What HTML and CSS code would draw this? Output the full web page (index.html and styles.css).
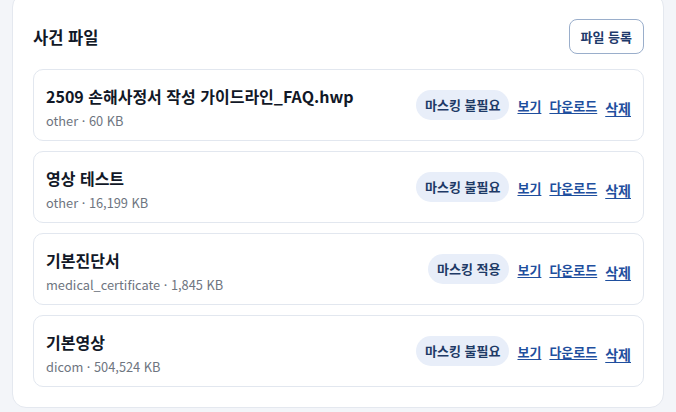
FILE: index.html
```html
<!DOCTYPE html>
<html lang="ko">
<head>
<meta charset="utf-8">
<link rel="stylesheet" href="styles.css">
</head>
<body>
<div class="page">
  <section class="card">
    <header class="card-head">
      <h2 class="card-title">사건 파일</h2>
      <button class="btn-outline" type="button">파일 등록</button>
    </header>
    <ul class="files">
      <li class="file">
        <div class="file-info">
          <div class="file-name">2509 손해사정서 작성 가이드라인_FAQ.hwp</div>
          <div class="file-meta">other · 60 KB</div>
        </div>
        <div class="file-actions">
          <span class="badge">마스킹 불필요</span>
          <a class="link" href="#">보기</a>
          <a class="link" href="#">다운로드</a>
          <button class="link link-del" type="button">삭제</button>
        </div>
      </li>
      <li class="file">
        <div class="file-info">
          <div class="file-name">영상 테스트</div>
          <div class="file-meta">other · 16,199 KB</div>
        </div>
        <div class="file-actions">
          <span class="badge">마스킹 불필요</span>
          <a class="link" href="#">보기</a>
          <a class="link" href="#">다운로드</a>
          <button class="link link-del" type="button">삭제</button>
        </div>
      </li>
      <li class="file">
        <div class="file-info">
          <div class="file-name">기본진단서</div>
          <div class="file-meta">medical_certificate · 1,845 KB</div>
        </div>
        <div class="file-actions">
          <span class="badge">마스킹 적용</span>
          <a class="link" href="#">보기</a>
          <a class="link" href="#">다운로드</a>
          <button class="link link-del" type="button">삭제</button>
        </div>
      </li>
      <li class="file">
        <div class="file-info">
          <div class="file-name">기본영상</div>
          <div class="file-meta">dicom · 504,524 KB</div>
        </div>
        <div class="file-actions">
          <span class="badge">마스킹 불필요</span>
          <a class="link" href="#">보기</a>
          <a class="link" href="#">다운로드</a>
          <button class="link link-del" type="button">삭제</button>
        </div>
      </li>
    </ul>
  </section>
</div>
</body>
</html>
```

FILE: styles.css
```css
html, body {
  margin: 0;
  padding: 0;
  background: #f3f5f9;
  font-family: "Noto Sans CJK KR", "Noto Sans", sans-serif;
  color: #111827;
}

.page {
  padding: 0 12px 4px 12px;
}

.card {
  width: 652px;
  box-sizing: border-box;
  margin-top: -7px;
  background: #ffffff;
  border: 1px solid #e4e8ef;
  border-radius: 14px;
  padding: 25px 19px 20px 20px;
}

.card-head {
  display: flex;
  align-items: center;
  justify-content: space-between;
  margin-bottom: 15px;
}

.card-title {
  margin: 0;
  font-size: 16.5px;
  font-weight: 700;
  line-height: 24px;
  color: #111827;
}

.btn-outline {
  height: 35px;
  padding: 0 11px;
  background: #ffffff;
  border: 1px solid #9aaecb;
  border-radius: 8px;
  font-family: inherit;
  font-size: 13px;
  font-weight: 700;
  color: #1e3a6b;
}

.files {
  list-style: none;
  margin: 0;
  padding: 0;
  display: flex;
  flex-direction: column;
  gap: 10px;
}

.file {
  height: 72px;
  box-sizing: border-box;
  border: 1px solid #e2e7ef;
  border-radius: 10px;
  padding: 0 12px 0 12px;
  display: flex;
  align-items: center;
  justify-content: space-between;
}

.file-info {
  display: flex;
  flex-direction: column;
  gap: 3px;
  padding-top: 5px;
}

.file-name {
  font-size: 16px;
  font-weight: 700;
  line-height: 23px;
  color: #111827;
}

.file-meta {
  font-size: 12.8px;
  line-height: 20px;
  color: #6e7580;
}

.file-actions {
  display: flex;
  align-items: center;
  gap: 8px;
}

.badge {
  height: 30px;
  line-height: 30px;
  padding: 0 9px;
  border-radius: 15px;
  background: #e8eef9;
  color: #1e3a66;
  font-size: 13px;
  font-weight: 700;
}

.link {
  font-size: 13px;
  font-weight: 700;
  color: #1f4f9e;
  text-decoration: underline;
  text-underline-offset: 2px;
}

.link-del {
  background: none;
  border: none;
  padding: 6px 0 0 0;
  font-family: inherit;
  font-size: 14px;
  cursor: pointer;
}
```
